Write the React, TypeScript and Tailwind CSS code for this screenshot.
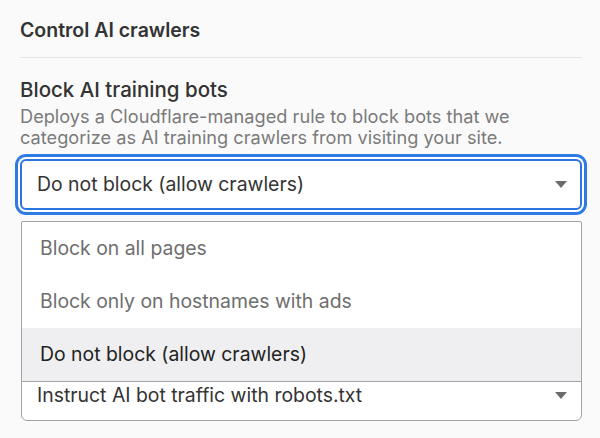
const options = [
  "Block on all pages",
  "Block only on hostnames with ads",
  "Do not block (allow crawlers)",
];

function Caret() {
  return (
    <svg width="12" height="7" viewBox="0 0 12 7" className="shrink-0">
      <path d="M0 0 L12 0 L6 7 Z" fill="#6b6b6b" />
    </svg>
  );
}

export default function App() {
  const selected = "Do not block (allow crawlers)";

  return (
    <div className="h-[438px] w-[600px] overflow-hidden bg-[#fafafa] pl-[20px] pr-[18px] font-['Inter','Liberation_Sans',sans-serif]">
      <div className="border-b border-[#e4e4e4] pb-[13px] pt-[16px]">
        <h2 className="text-[19.5px] font-semibold leading-7 text-[#333333]">Control AI crawlers</h2>
      </div>

      <div className="mt-[18px]">
        <div className="text-[20.5px] font-medium leading-7 text-[#333333]">Block AI training bots</div>
        <p className="mt-[2px] text-[18.2px] leading-[21px] text-[#7a7a7a]">
          Deploys a Cloudflare-managed rule to block bots that we
          <br />
          categorize as AI training crawlers from visiting your site.
        </p>

        <div className="relative mt-[11px]">
          <button
            type="button"
            className="flex h-[51px] w-full items-center justify-between rounded-[6px] border-2 border-[#2b74e2] bg-white pl-[15px] pr-[13px] shadow-[0_0_0_2px_#ffffff,0_0_0_5px_#2f7be6]"
          >
            <span className="text-[19.4px] text-[#333333]">{selected}</span>
            <Caret />
          </button>

          {/* open listbox, lies over the next field */}
          <ul className="absolute left-[1px] right-0 top-[62px] z-10 rounded-t-[2px] border border-[#a3a3a3] bg-white">
            {options.map((o) => (
              <li
                key={o}
                className={
                  o === selected
                    ? "flex h-[53px] items-center bg-[#efeff1] px-[18px] text-[19.4px] text-[#222222]"
                    : "flex h-[53px] items-center px-[18px] text-[19.4px] text-[#6e6e6e]"
                }
              >
                {o}
              </li>
            ))}
          </ul>
        </div>
      </div>

      <button
        type="button"
        className="ml-[1px] mt-[160px] flex h-[51px] w-[calc(100%-1px)] items-center justify-between rounded-[6px] border border-[#a3a3a3] bg-white pl-[15px] pr-[14px]"
      >
        <span className="text-[19.4px] text-[#333333]">Instruct AI bot traffic with robots.txt</span>
        <Caret />
      </button>
    </div>
  );
}
